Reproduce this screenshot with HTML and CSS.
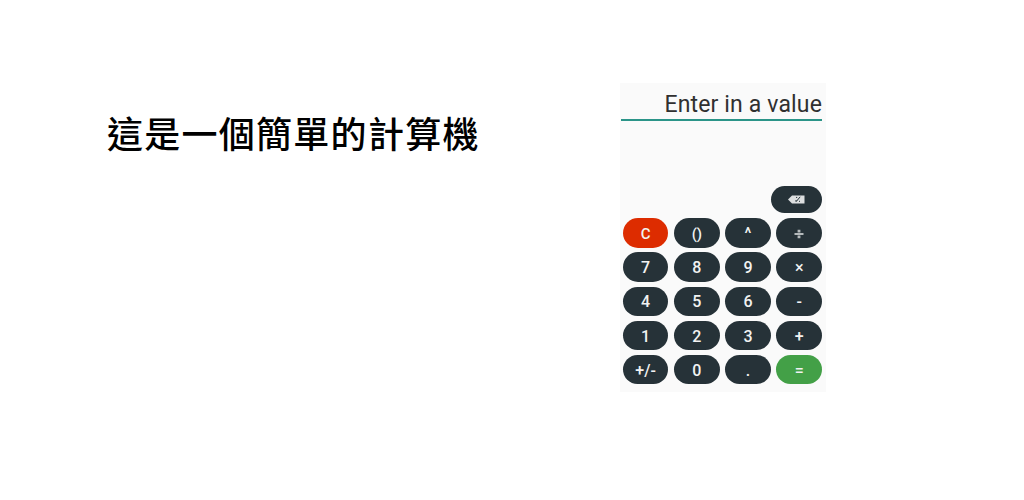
FILE: index.html
```html
<!DOCTYPE html>
<html lang="zh-Hant">
<head>
<meta charset="utf-8">
<title>計算機</title>
<link rel="stylesheet" href="styles.css">
</head>
<body>
<main class="page">
  <h1 class="title">這是一個簡單的計算機</h1>
  <section class="calculator">
    <div class="display">Enter in a value</div>
    <div class="tools">
      <button class="key key-back" aria-label="Backspace">
        <svg class="back-icon" viewBox="0 0 17 9" width="17" height="9"><path d="M0 4.5 4 .5h12.5v8H4z" fill="#dcdedf"/><path d="M12.2 1.8 8.2 6.6M8 2.4h1.2M8 5v1.6M11 6.3h1" stroke="#263238" stroke-width="1" fill="none"/></svg>
      </button>
    </div>
    <div class="keys">
      <button class="key key-clear">C</button><button class="key key-paren">()</button><button class="key key-power">^</button><button class="key key-divide">
        <svg viewBox="0 0 10 10" width="10" height="10"><path d="M.5 5h9" stroke="#b5babc" stroke-width="2"/><path d="M3.6 .8h2.8v2.7H3.6zM3.6 6.5h2.8v2.7H3.6z" fill="#b5babc"/></svg>
      </button>
      <button class="key">7</button><button class="key">8</button><button class="key">9</button><button class="key">×</button>
      <button class="key">4</button><button class="key">5</button><button class="key">6</button><button class="key">-</button>
      <button class="key">1</button><button class="key">2</button><button class="key">3</button><button class="key">+</button>
      <button class="key">+/-</button><button class="key">0</button><button class="key">.</button><button class="key key-equals">=</button>
    </div>
  </section>
</main>
</body>
</html>
```
FILE: styles.css
```css
* { box-sizing: border-box; }
body { margin: 0; background: #fff; }
.page {
  display: flex;
  align-items: flex-start;
  height: 500px;
  padding: 83px 0 0 107px;
}
.title {
  width: 513px;
  margin: 23px 0 0;
  font: 500 36px/52px "Noto Sans CJK TC", sans-serif;
  letter-spacing: 1.27px;
  color: #000;
}
.calculator {
  width: 206px;
  height: 309px;
  padding: 0 4px 0 1px;
  background: #fafafa;
  font-family: Roboto, sans-serif;
}
.display {
  height: 38px;
  padding-top: 8px;
  border-bottom: 2px solid #2b9488;
  font-size: 23px;
  line-height: 28px;
  letter-spacing: 0.15px;
  text-align: right;
  white-space: nowrap;
  color: #303030;
}
.tools {
  display: flex;
  justify-content: flex-end;
  padding-top: 65px;
}
.keys {
  display: grid;
  grid-template-columns: repeat(4, 45.6px);
  grid-auto-rows: 29.5px;
  gap: 4.7px 5.6px;
  margin: 5.2px 0 0 1.8px;
}
.key {
  display: flex;
  align-items: center;
  justify-content: center;
  padding: 2px 0 0;
  border: 0;
  border-radius: 15px;
  background: #263238;
  color: #f2f2f2;
  font: 500 16px/20px Roboto, sans-serif;
}
.key-back { width: 51px; height: 27px; padding: 0; }
.key-clear { background: #dd2c00; font-size: 15px; }
.key-paren { font-size: 15px; letter-spacing: -0.3px; }
.key-power { padding-top: 3px; }
.key-equals { background: #43a047; }
```
